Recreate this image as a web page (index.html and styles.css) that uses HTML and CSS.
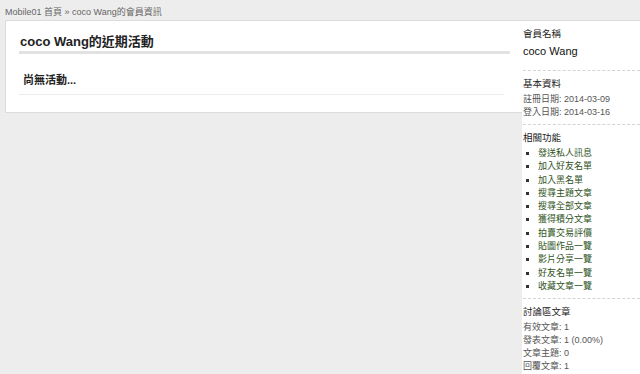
FILE: index.html
```html
<!DOCTYPE html>
<html lang="zh-Hant">
<head>
  <meta charset="UTF-8" />
  <meta name="viewport" content="width=device-width, initial-scale=1.0"/>
  <title>coco Wang的會員資訊</title>
  <link rel="stylesheet" href="styles.css">
</head>
<body>
  <div class="crumbs">Mobile01 首頁 » coco Wang的會員資訊</div>
  <div class="page">
    <main class="main">
      <h1>coco Wang的近期活動</h1>
      <div class="empty">尚無活動...</div>
    </main>
    <aside class="sidebar">
      <section class="block">
        <h3>會員名稱</h3>
        <p class="name">coco Wang</p>
      </section>
      <section class="block">
        <h3>基本資料</h3>
        <p>註冊日期: 2014-03-09</p>
        <p>登入日期: 2014-03-16</p>
      </section>
      <section class="block">
        <h3>相關功能</h3>
        <ul class="links">
          <li><a href="#">發送私人訊息</a></li>
          <li><a href="#">加入好友名單</a></li>
          <li><a href="#">加入黑名單</a></li>
          <li><a href="#">搜尋主題文章</a></li>
          <li><a href="#">搜尋全部文章</a></li>
          <li><a href="#">獲得積分文章</a></li>
          <li><a href="#">拍賣交易評價</a></li>
          <li><a href="#">貼圖作品一覽</a></li>
          <li><a href="#">影片分享一覽</a></li>
          <li><a href="#">好友名單一覽</a></li>
          <li><a href="#">收藏文章一覽</a></li>
        </ul>
      </section>
      <section class="block last">
        <h3>討論區文章</h3>
        <p>有效文章: 1</p>
        <p>發表文章: 1 (0.00%)</p>
        <p>文章主題: 0</p>
        <p>回覆文章: 1</p>
      </section>
    </aside>
  </div>
</body>
</html>
```

FILE: styles.css
```css
* {
  margin: 0;
  padding: 0;
  box-sizing: border-box;
}
body {
  background-color: #ededed;
  color: #222;
  font-family: "Liberation Sans", "Noto Sans CJK TC", sans-serif;
  font-size: 9px;
}
.crumbs {
  color: #666;
  padding: 6px 5px 0;
  height: 20px;
  line-height: 12px;
}
.page {
  display: flex;
  align-items: flex-start;
}
.main {
  flex: 1;
  margin-left: 5px;
  background-color: #fff;
  border: 1px solid #dcdcdc;
  border-right: none;
  padding: 11px 12px 18px 13px;
  height: 93px;
}
.main h1 {
  font-size: 13px;
  line-height: 20px;
  padding: 0 0 0 1px;
  border-bottom: 3px solid #e2e2e2;
  height: 22px;
}
.empty {
  font-size: 11px;
  font-weight: bold;
  line-height: 14px;
  padding: 19px 4px 7px;
  margin-right: 6px;
  border-bottom: 1px solid #ececec;
}
.sidebar {
  width: 118px;
  background-color: #fff;
  border-top: 1px solid #dcdcdc;
  min-height: calc(100vh - 20px);
  padding-left: 1px;
}
.block {
  border-bottom: 1px dashed #d4d4d4;
  padding: 6px 0 5px;
}
.block.last {
  border-bottom: none;
}
.block h3 {
  font-size: 9.5px;
  font-weight: normal;
  color: #222;
  line-height: 13px;
  margin-bottom: 3px;
}
.block p {
  color: #555;
  line-height: 13px;
}
.block p.name {
  font-size: 11px;
  color: #111;
  line-height: 16px;
  padding-bottom: 6px;
}
.links {
  list-style: square;
  padding-left: 15px;
}
.links li {
  line-height: 13.3px;
  color: #333;
}
.links a {
  color: #2f5323;
  text-decoration: none;
}
```
